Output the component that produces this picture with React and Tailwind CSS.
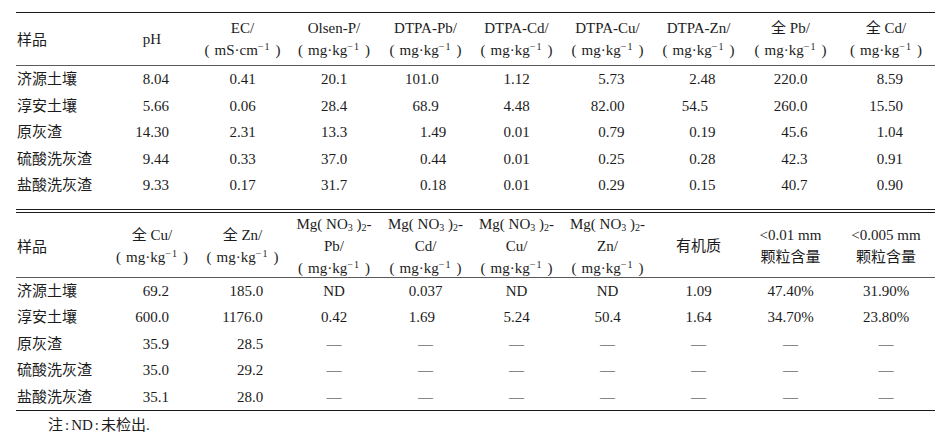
import React from 'react';

const grid = 'grid grid-cols-[91px_90px_91px_92px_91px_91px_91px_91px_93px_98px]';

const Unit = ({ u = 'mg·kg' }) => (
  <span>
    (<span className="mx-[5px]">
      {u}
      <sup className="text-[10px] tracking-[1px]">−1</sup>
    </span>)
  </span>
);

const Mg = () => (
  <span>
    Mg( NO<sub className="text-[10px]">3</sub> )<sub className="text-[10px]">2</sub>-
  </span>
);

const head1 = [
  ['样品'],
  ['pH'],
  ['EC/', <Unit u="mS·cm" />],
  ['Olsen-P/', <Unit />],
  ['DTPA-Pb/', <Unit />],
  ['DTPA-Cd/', <Unit />],
  ['DTPA-Cu/', <Unit />],
  ['DTPA-Zn/', <Unit />],
  ['全 Pb/', <Unit />],
  ['全 Cd/', <Unit />],
];

const head2 = [
  ['样品'],
  ['全 Cu/', <Unit />],
  ['全 Zn/', <Unit />],
  [<Mg />, 'Pb/', <Unit />],
  [<Mg />, 'Cd/', <Unit />],
  [<Mg />, 'Cu/', <Unit />],
  [<Mg />, 'Zn/', <Unit />],
  ['有机质'],
  ['<0.01 mm', '颗粒含量'],
  ['<0.005 mm', '颗粒含量'],
];

const rows1 = [
  ['济源土壤', '8.04', '0.41', '20.1', '101.0', '1.12', '5.73', '2.48', '220.0', '8.59'],
  ['淳安土壤', '5.66', '0.06', '28.4', '68.9', '4.48', '82.00', '54.5', '260.0', '15.50'],
  ['原灰渣', '14.30', '2.31', '13.3', '1.49', '0.01', '0.79', '0.19', '45.6', '1.04'],
  ['硫酸洗灰渣', '9.44', '0.33', '37.0', '0.44', '0.01', '0.25', '0.28', '42.3', '0.91'],
  ['盐酸洗灰渣', '9.33', '0.17', '31.7', '0.18', '0.01', '0.29', '0.15', '40.7', '0.90'],
];

const rows2 = [
  ['济源土壤', '69.2', '185.0', 'ND', '0.037', 'ND', 'ND', '1.09', '47.40%', '31.90%'],
  ['淳安土壤', '600.0', '1176.0', '0.42', '1.69', '5.24', '50.4', '1.64', '34.70%', '23.80%'],
  ['原灰渣', '35.9', '28.5', '—', '—', '—', '—', '—', '—', '—'],
  ['硫酸洗灰渣', '35.0', '29.2', '—', '—', '—', '—', '—', '—', '—'],
  ['盐酸洗灰渣', '35.1', '28.0', '—', '—', '—', '—', '—', '—', '—'],
];

const isNum = (s) => /^[0-9]/.test(s);
const split = (s) => {
  const i = s.indexOf('.');
  return i < 0 ? [s, ''] : [s.slice(0, i), s.slice(i)];
};

// pad numbers with invisible zeros so each column lines up on the decimal point
const colStats = (rows) =>
  rows[0].map((_, c) => {
    let a = 0;
    let b = 0;
    rows.forEach((r) => {
      if (!isNum(r[c])) return;
      const [i, f] = split(r[c]);
      a = Math.max(a, i.length);
      b = Math.max(b, f.length);
    });
    return [a, b];
  });

const Num = ({ v, stat }) => {
  if (!isNum(v)) return <span>{v}</span>;
  const [i, f] = split(v);
  const left = '0'.repeat(stat[0] - i.length);
  let right = '';
  if (stat[1] > f.length) right = (f.length === 0 ? '.' : '') + '0'.repeat(stat[1] - Math.max(f.length, 1));
  return (
    <span>
      <span className="invisible">{left}</span>
      {v}
      <span className="invisible">{right}</span>
    </span>
  );
};

const Header = ({ cols, h }) => (
  <div className={`${grid} ${h} border-b border-[#5a5a5a]`}>
    {cols.map((lines, i) => (
      <div
        key={i}
        className={`flex flex-col justify-center leading-[22px] ${i === 0 ? 'items-start pl-[1px] pt-[2px]' : 'items-center'}`}
      >
        {lines.map((l, j) => (
          <div key={j} className="whitespace-nowrap">
            {l}
          </div>
        ))}
      </div>
    ))}
  </div>
);

const Rows = ({ rows }) => {
  const stats = colStats(rows);
  return rows.map((r, k) => (
    <div key={k} className={`${grid} h-[26.5px] items-center`}>
      {r.map((v, i) =>
        i === 0 ? (
          <div key={i} className="pl-[1px]">
            {v}
          </div>
        ) : (
          <div key={i} className="text-center whitespace-nowrap">
            <Num v={v} stat={stats[i]} />
          </div>
        )
      )}
    </div>
  ));
};

export default function App() {
  return (
    <div className="w-[950px] h-[447px] bg-white overflow-hidden pt-[12px] pl-[16px] text-[15px] text-[#1c1c1c] font-['Liberation_Serif','Noto_Sans_CJK_SC',serif]">
      <div className="w-[919px]">
        <div className="border-t-[1.5px] border-[#1a1a1a]">
          <Header cols={head1} h="h-[53px]" />
          <Rows rows={rows1} />
        </div>
        <div className="h-[10px]" />
        <div className="border-t-[1.5px] border-[#1a1a1a] h-[3px]" />
        <div className="border-t-[1.5px] border-[#1a1a1a] border-b-[1.5px]">
          <Header cols={head2} h="h-[65px]" />
          <Rows rows={rows2} />
        </div>
      </div>
      <div className="pl-[32px] pt-[3px] leading-[22px]">
        注<span className="mx-[2px]">:</span>ND<span className="mx-[2px]">:</span>未检出.
      </div>
    </div>
  );
}
